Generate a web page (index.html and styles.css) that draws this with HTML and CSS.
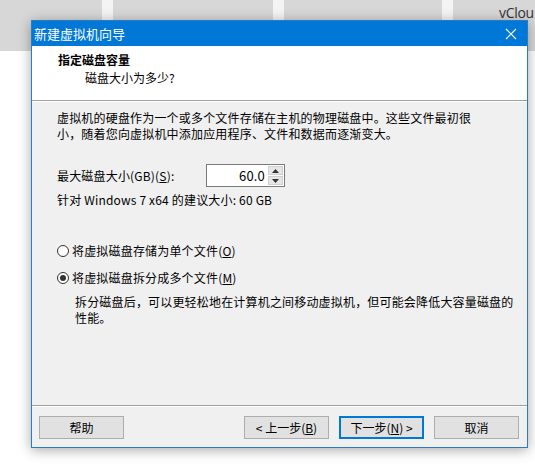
FILE: index.html
```html
<!DOCTYPE html>
<html lang="zh-CN">
<head>
<meta charset="utf-8">
<title>新建虚拟机向导</title>
<link rel="stylesheet" href="styles.css">
</head>
<body>
<div class="desktop">
  <div class="tiles">
    <div class="tile t1"></div>
    <div class="tile t2"></div>
    <div class="tile t3"></div>
    <div class="tile t4"><span class="vcloud">vClou</span></div>
  </div>

  <div class="dialog">
    <div class="titlebar">
      <span class="title">新建虚拟机向导</span>
      <svg class="close" width="12" height="12" viewBox="0 0 12 12"><path d="M1 1 L11 11 M11 1 L1 11" stroke="#fff" stroke-width="1.2" fill="none"/></svg>
    </div>
    <div class="header">
      <div class="h-title">指定磁盘容量</div>
      <div class="h-sub">磁盘大小为多少?</div>
    </div>
    <div class="sep"></div>
    <div class="content">
      <p class="para">虚拟机的硬盘作为一个或多个文件存储在主机的物理磁盘中。这些文件最初很<br>小，随着您向虚拟机中添加应用程序、文件和数据而逐渐变大。</p>
      <div class="size-row">
        <span class="label">最大磁盘大小(GB)(<u>S</u>):</span>
        <div class="spin">
          <span class="spin-val">60.0</span>
          <div class="spin-btns">
            <div class="sb"><svg width="7" height="4" viewBox="0 0 7 4"><path d="M3.5 0 L7 4 L0 4 Z" fill="#333"/></svg></div>
            <div class="sb"><svg width="7" height="4" viewBox="0 0 7 4"><path d="M0 0 L7 0 L3.5 4 Z" fill="#333"/></svg></div>
          </div>
        </div>
      </div>
      <div class="rec">针对 Windows 7 x64 的建议大小: 60 GB</div>
      <div class="radio r1"><span class="dot"></span><span>将虚拟磁盘存储为单个文件(<u>O</u>)</span></div>
      <div class="radio r2"><span class="dot on"></span><span>将虚拟磁盘拆分成多个文件(<u>M</u>)</span></div>
      <p class="desc">拆分磁盘后，可以更轻松地在计算机之间移动虚拟机，但可能会降低大容量磁盘的<br>性能。</p>
    </div>
    <div class="sep"></div>
    <div class="footer">
      <div class="btn">帮助</div>
      <div class="spacer"></div>
      <div class="btn">&lt; 上一步(<u>B</u>)</div>
      <div class="btn default">下一步(<u>N</u>) &gt;</div>
      <div class="btn">取消</div>
    </div>
  </div>
</div>
</body>
</html>
```

FILE: styles.css
```css
* { box-sizing: border-box; }
html, body { margin: 0; padding: 0; }
body {
  width: 535px;
  height: 470px;
  overflow: hidden;
  background: #ffffff;
  font-family: "Noto Sans CJK SC", "Noto Sans", sans-serif;
  font-size: 12px;
  color: #000;
}
.desktop {
  position: relative;
  width: 535px;
  height: 470px;
}
.tiles {
  display: flex;
  height: 51px;
  background: #f4f4f4;
  gap: 11px;
}
.tile {
  background: #d7d7d7;
  height: 51px;
}
.t1 { width: 102px; }
.t2 { width: 160px; }
.t3 { width: 158px; }
.t4 { flex: 1; position: relative; overflow: hidden; }
.vcloud {
  position: absolute;
  left: 46px;
  top: 3px;
  font-family: "Open Sans", "Noto Sans", sans-serif;
  font-size: 14px;
  letter-spacing: -0.3px;
  color: #333;
}
.dialog {
  position: absolute;
  left: 31px;
  top: 20px;
  width: 497px;
  height: 428px;
  background: #f0f0f0;
  border: 1px solid #2b7bc4;
  box-shadow: 0 2px 12px rgba(0,0,0,0.35);
  display: flex;
  flex-direction: column;
}
.titlebar {
  height: 25px;
  background: #0078d7;
  color: #fff;
  display: flex;
  align-items: center;
  padding: 0 10px 0 2px;
  flex: none;
}
.title {
  font-size: 13px;
  flex: 1;
}
.close { display: block; }
.header {
  height: 54px;
  background: #fff;
  padding: 5px 0 0 26px;
  flex: none;
}
.h-title {
  font-weight: bold;
  line-height: 18px;
}
.h-sub {
  padding-left: 27px;
  line-height: 17px;
}
.sep {
  height: 2px;
  border-top: 1px solid #a0a0a0;
  border-bottom: 1px solid #ffffff;
  flex: none;
}
.content {
  flex: 1;
  padding: 8px 0 0 25px;
  letter-spacing: 0.18px;
}
.para, .desc {
  margin: 0;
  line-height: 16px;
}
.size-row {
  display: flex;
  align-items: center;
  margin-top: 22px;
  height: 23px;
}
.label { width: 149px; }
.spin {
  width: 79px;
  height: 23px;
  background: #fff;
  border: 1px solid #7a7a7a;
  display: flex;
  align-items: center;
}
.spin-val {
  flex: 1;
  text-align: right;
  padding-right: 3px;
  font-size: 13px;
}
.spin-btns {
  width: 15px;
  height: 19px;
  margin-right: 1px;
  display: flex;
  flex-direction: column;
  gap: 1px;
}
.sb {
  flex: 1;
  background: #e6e6e6;
  border: 1px solid #cfcfcf;
  display: flex;
  align-items: center;
  justify-content: center;
}
.sb svg { display: block; }
.rec {
  margin-top: 5px;
  line-height: 16px;
  color: #000;
}
.radio {
  display: flex;
  align-items: center;
  line-height: 16px;
  gap: 3px;
}
.r1 { margin-top: 35px; }
.r2 { margin-top: 11px; }
.dot {
  width: 12px;
  height: 12px;
  border: 1px solid #333;
  border-radius: 50%;
  background: #fff;
  position: relative;
}
.dot.on::after {
  content: "";
  position: absolute;
  left: 2px;
  top: 2px;
  width: 6px;
  height: 6px;
  border-radius: 50%;
  background: #333;
}
.desc {
  margin-top: 8px;
  padding-left: 18px;
}
.footer {
  height: 40px;
  display: flex;
  align-items: flex-start;
  padding: 9px 8px 0 7px;
  gap: 10px;
  flex: none;
}
.spacer { flex: 1; }
.btn {
  width: 85px;
  height: 23px;
  background: #e1e1e1;
  border: 1px solid #adadad;
  display: flex;
  align-items: center;
  justify-content: center;
  font-size: 12px;
}
.btn.default {
  border: 2px solid #0078d7;
}
u { text-decoration: underline; text-underline-offset: 1px; }
```
